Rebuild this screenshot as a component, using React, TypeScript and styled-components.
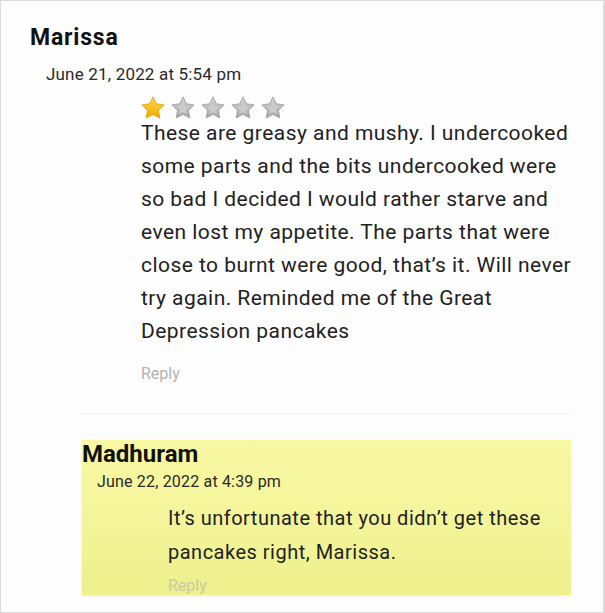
import React from "react";
import styled, { createGlobalStyle } from "styled-components";

const Global = createGlobalStyle`
  html, body { margin: 0; padding: 0; background: #fdfdfd; }
  body { font-family: Roboto, "Liberation Sans", Arial, sans-serif; }
`;

const Frame = styled.div`
  box-sizing: border-box;
  width: 605px;
  height: 613px;
  border: 1px solid #dcdcdc;
  border-right-width: 2px;
  background: #fdfdfd;
  overflow: hidden;
  padding: 22px 0 0 29px;
`;

const Author = styled.div<{ $size: number; $spacing: number; $lh: number }>`
  font-size: ${(p) => p.$size}px;
  letter-spacing: ${(p) => p.$spacing}px;
  line-height: ${(p) => p.$lh}px;
  font-weight: 700;
  color: #111;
`;

const DateLine = styled.div<{ $indent: number; $size: number; $top: number }>`
  font-size: ${(p) => p.$size}px;
  letter-spacing: 0.18px;
  color: #2a2a2a;
  margin: ${(p) => p.$top}px 0 0 ${(p) => p.$indent}px;
  line-height: 20px;
`;

const Content = styled.div<{ $indent: number }>`
  margin-left: ${(p) => p.$indent}px;
`;

const Stars = styled.div`
  display: flex;
  gap: 6px;
  margin-top: 12px;
  height: 22px;
  align-items: center;
`;

const Body = styled.p<{ $size: number; $spacing: number; $lh: number; $top: number }>`
  margin: ${(p) => p.$top}px 0 0 0;
  font-size: ${(p) => p.$size}px;
  letter-spacing: ${(p) => p.$spacing}px;
  line-height: ${(p) => p.$lh}px;
  color: #222;
  white-space: nowrap;
`;

const ReplyLink = styled.div<{ $top: number; $muted?: boolean }>`
  font-size: 16px;
  color: ${(p) => (p.$muted ? "#c9caa6" : "#b3b3b3")};
  margin-top: ${(p) => p.$top}px;
  line-height: 20px;
`;

const Separator = styled.div`
  margin: 29px 0 0 50px;
  width: 490px;
  height: 2px;
  background: #f6f6f6;
`;

const ReplyBox = styled.div`
  margin: 25px 0 0 52px;
  width: 489px;
  height: 155px;
  overflow: hidden;
  background: linear-gradient(180deg, #f8f8a3 0%, #f4f59b 50%, #edf08b 100%);
  box-shadow: 0 1px 3px rgba(0, 0, 0, 0.08);
`;

const Star = ({ filled }: { filled: boolean }) => {
  const id = filled ? "gold" : "grey";
  return (
    <svg width="24" height="23" viewBox="0 0 24 23">
      <defs>
        <linearGradient id={id} x1="0" y1="0" x2="0" y2="1">
          {filled ? (
            <>
              <stop offset="0" stopColor="#ffd84d" />
              <stop offset="1" stopColor="#f0a800" />
            </>
          ) : (
            <>
              <stop offset="0" stopColor="#d6d6d6" />
              <stop offset="1" stopColor="#a6a6a6" />
            </>
          )}
        </linearGradient>
      </defs>
      <path
        d="M12 .8l3.4 7 7.7 1.1-5.6 5.4 1.3 7.7L12 18.4 5.2 22l1.3-7.7L.9 8.9l7.7-1.1z"
        fill={`url(#${id})`}
        stroke={filled ? "#e39f00" : "#9c9c9c"}
        strokeWidth="0.8"
        strokeLinejoin="round"
      />
      {!filled && (
        <path
          d="M12 6.2l1.9 3.9 4.3.6-3.1 3 .7 4.3L12 16l-3.8 2 .7-4.3-3.1-3 4.3-.6z"
          fill="#cbcbcb"
        />
      )}
    </svg>
  );
};

const mainLines = [
  "These are greasy and mushy. I undercooked",
  "some parts and the bits undercooked were",
  "so bad I decided I would rather starve and",
  "even lost my appetite. The parts that were",
  "close to burnt were good, that’s it. Will never",
  "try again. Reminded me of the Great",
  "Depression pancakes",
];

const replyLines = [
  "It’s unfortunate that you didn’t get these",
  "pancakes right, Marissa.",
];

const withBreaks = (lines: string[]) =>
  lines.map((l, i) => (
    <React.Fragment key={i}>
      {l}
      {i < lines.length - 1 && <br />}
    </React.Fragment>
  ));

export default function App() {
  return (
    <>
      <Global />
      <Frame>
        <Author $size={23} $spacing={0.8} $lh={30}>
          Marissa
        </Author>
        <DateLine $indent={16} $size={17} $top={11}>
          June 21, 2022 at 5:54 pm
        </DateLine>
        <Content $indent={111}>
          <Stars>
            {[0, 1, 2, 3, 4].map((i) => (
              <Star key={i} filled={i === 0} />
            ))}
          </Stars>
          <Body $size={21} $spacing={0.45} $lh={33} $top={-1}>
            {withBreaks(mainLines)}
          </Body>
          <ReplyLink $top={16}>Reply</ReplyLink>
        </Content>
        <Separator />
        <ReplyBox>
          <Author $size={24} $spacing={0} $lh={28}>
            Madhuram
          </Author>
          <DateLine $indent={15} $size={16} $top={4}>
            June 22, 2022 at 4:39 pm
          </DateLine>
          <Content $indent={86}>
            <Body $size={20} $spacing={0.5} $lh={34} $top={9}>
              {withBreaks(replyLines)}
            </Body>
            <ReplyLink $top={7} $muted>
              Reply
            </ReplyLink>
          </Content>
        </ReplyBox>
      </Frame>
    </>
  );
}
